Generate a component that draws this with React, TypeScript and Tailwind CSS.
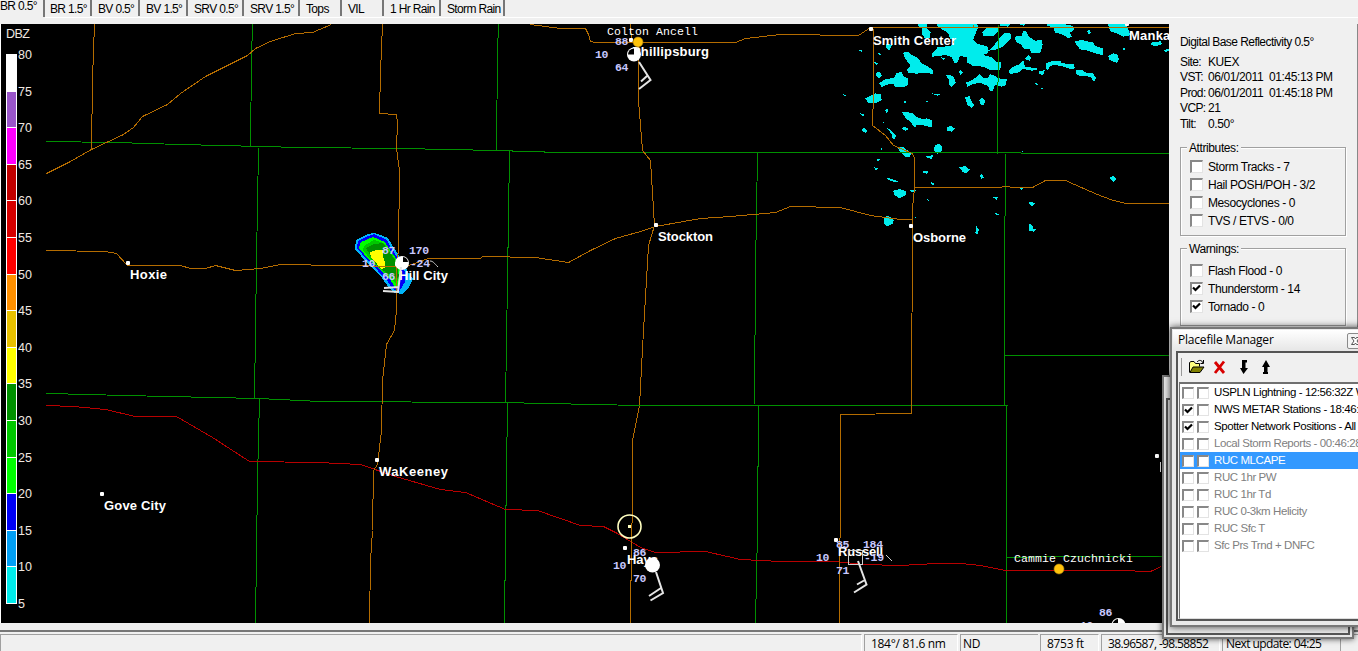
import type { ReactNode } from "react";

const tabs = [
  { label: "BR 1.5°", width: "w-[47px]" },
  { label: "BV 0.5°", width: "w-[47px]" },
  { label: "BV 1.5°", width: "w-[47px]" },
  { label: "SRV 0.5°", width: "w-[55px]" },
  { label: "SRV 1.5°", width: "w-[55px]" },
  { label: "Tops", width: "w-[41px]" },
  { label: "VIL", width: "w-[41px]" },
  { label: "1 Hr Rain", width: "w-[56px]" },
  { label: "Storm Rain", width: "w-[63px]" },
];

// from strongest to weakest, each band spans 5 dBZ
const scale = [
  { dbz: 80, color: "#ffffff" },
  { dbz: 75, color: "#9955c9" },
  { dbz: 70, color: "#ff00ff" },
  { dbz: 65, color: "#c00000" },
  { dbz: 60, color: "#d60000" },
  { dbz: 55, color: "#ff0000" },
  { dbz: 50, color: "#ff9000" },
  { dbz: 45, color: "#e7c000" },
  { dbz: 40, color: "#ffff00" },
  { dbz: 35, color: "#009000" },
  { dbz: 30, color: "#00c800" },
  { dbz: 25, color: "#00ff00" },
  { dbz: 20, color: "#0000f6" },
  { dbz: 15, color: "#019ff4" },
  { dbz: 10, color: "#00ecec" },
];

const counties = [
  "46,141 115,142 180,144 300,147 400,148 496,150 560,152 865,152 1169,153",
  "46,393 88,394 123,395 258,398 320,401 500,402 640,405 1007,405",
  "252,24 251,58 250,147",
  "258,148 256,260 254,398",
  "259,398 257,480 255,623",
  "498,24 497,52 496,150",
  "509,151 507,280 505,403",
  "507,403 505,540 504,623",
  "757,153 755,270 754,404",
  "758,405 757,530 755,623",
  "998,24 998,81",
  "997,81 997,153",
  "1005,153 1005,215",
  "1004,215 1004,405",
  "1006,405 1006,623",
  "1004,355 1169,355",
  "1007,557 1060,556 1161,556",
];

const highways = [
  "94,24 93,50 92,80 91,149",
  "46,173 70,161 91,149 123,134 133,127 142,116 167,104 180,93 205,76 237,60 247,55 255,48 270,41 295,33 312,32 331,24",
  "382,24 380,72 379,113 396,114 397,123 396,148 399,170 398,250 396,266 396,310 394,330 386,344 382,380 381,430 377,464 373,470 372,530 370,560 369,623",
  "46,250 105,251 116,253 127,265 180,265 190,268 205,268 215,265 235,270 260,268 280,264 340,265 400,266 408,265 428,258 445,258 480,258 482,256 535,257 568,262 590,250 615,238 640,231 655,226 700,218 730,216 775,212 790,206 840,207 870,215 900,219 912,219",
  "530,24 560,28 585,28 588,34 590,41 595,42 735,42 745,38 780,34 858,35 870,27 1169,27",
  "630,24 631,40 638,42 638,100 642,150 650,160 654,225 648,245 643,330 639,405 632,440 632,505 631,540 630,623",
  "873,28 873,93 872,125 885,135 893,145 912,153 914,158 914,187 912,208 912,219 911,413 840,414 840,535 839,540 839,623",
  "914,187 998,187 1005,186 1013,187 1032,187 1045,180 1065,180 1083,188 1097,194 1110,199 1125,203 1169,203",
  "973,24 973,27",
];

const interstate =
  "46,405 73,406 105,409 135,416 176,416 212,437 249,461 318,462 360,464 395,476 440,489 465,492 505,509 537,510 580,525 603,526 617,533 640,547 655,552 705,551 740,559 780,561 835,561 863,564 900,565 935,563 960,563 980,565 1005,570 1118,570 1150,571 1161,566";

// light echoes, traced on a grid three times finer than the map
const echoes = [
  "232,12 262,12 260,25 272,35 270,55 255,55 245,40 245,22 236,20",
  "290,12 412,12 414,22 405,45 400,60 414,72 444,80 445,98 430,105 455,112 470,125 483,125 484,140 478,150 450,150 430,140 400,138 382,128 380,112 360,108 352,128 344,130 336,112 315,105 300,108 275,110 275,100 290,88 290,82 330,78 345,66 330,55 325,40 310,30 295,22",
  "440,25 455,20 480,20 475,35 460,48 430,48 427,38",
  "482,50 495,38 510,38 515,48 510,60 495,72 490,80 465,90 445,92 460,78 470,66",
  "480,12 510,12 505,20 482,18",
  "540,12 558,12 550,17 540,15",
  "523,50 545,48 550,32 560,35 565,48 585,62 605,60 608,75 600,100 575,100 570,88 550,85 545,75 528,65",
  "620,12 670,12 700,18 702,30 690,38 696,50 685,55 665,42 645,38 640,22 622,18",
  "803,12 855,12 866,30 870,46 850,50 830,40 812,34",
  "703,65 725,60 760,68 765,78 788,85 788,105 765,100 745,92 720,88",
  "805,108 820,100 835,105 836,120 830,128 808,120",
  "932,68 962,64 966,72 950,78 934,76",
  "972,90 987,86 987,92 976,96",
  "190,98 205,96 215,105 235,115 245,130 265,140 280,152 280,162 250,158 230,161 205,158 200,150 212,138 198,118 192,108",
  "110,155 120,155 126,168 118,175 108,168",
  "118,190 130,180 165,172 168,160 185,155 190,168 203,175 203,195 190,202 165,200 160,192 140,194 125,202",
  "318,165 338,167 345,178 347,188 335,200 328,195 328,182",
  "378,188 400,178 420,162 430,175 442,175 450,163 465,168 475,175 500,178 498,195 485,200 465,195 458,212 450,212 444,198 420,188 400,192 382,200",
  "506,155 515,142 540,132 550,122 555,140 590,145 590,150 575,152 548,146 535,158 510,162",
  "595,155 615,150 610,165 598,162",
  "618,130 640,122 662,122 665,130 700,132 705,145 690,147 665,138 640,135 628,140 625,150 618,146",
  "708,150 725,150 740,158 760,160 768,175 762,184 750,170 725,168 710,165",
  "555,115 565,105 573,112 570,122 558,120",
  "75,235 90,228 105,220 122,222 125,240 105,250 85,248",
  "186,276 215,278 228,290 250,298 260,295 275,300 275,322 245,315 230,315 225,322 210,305 195,292",
  "375,232 388,228 395,245 402,255 395,264 382,255",
  "418,240 427,233 436,242 432,254 422,254",
  "320,322 332,317 344,325 335,335 322,332",
  "282,385 285,375 298,372 308,380 305,392 293,402 284,395",
  "172,380 190,382 215,400 208,412 195,410 180,395",
  "138,322 150,328 168,345 165,358 156,355 155,342",
  "186,325 195,320 206,328 196,333",
  "256,408 280,406 275,416 262,415",
  "248,452 265,454 262,462 250,458",
  "358,442 375,438 389,448 380,460 368,456",
  "140,473 165,480 177,486 165,486 145,480",
  "160,512 180,507 200,515 198,525 178,535 162,524",
  "210,510 228,510 222,517 212,515",
  "132,592 145,587 162,600 158,612 140,620 132,612",
  "140,68 156,76 148,92 138,84",
  "112,98 125,102 120,108",
  "102,125 116,130 108,136",
  "56,90 68,92 64,96",
  "302,112 315,114 312,120",
  "356,155 362,150 368,158 362,166",
  "742,34 750,28 752,40 746,44",
  "849,85 854,85 854,90 849,90",
  "585,189 596,192 588,196",
  "602,202 610,206 606,209",
  "274,220 302,224 292,227",
  "189,242 200,242 196,251",
  "258,244 263,244 262,249",
  "136,272 142,264 144,276 138,280",
  "60,280 74,284 70,289",
  "64,330 72,324 82,332 78,340",
  "8,222 12,222 12,225 17,225 17,228 8,225",
  "126,306 134,306 132,310",
  "124,384 127,384 127,391 124,391",
  "110,418 120,418 114,424",
  "102,442 114,446 108,451",
  "272,485 284,492 276,496",
  "420,468 426,462 432,472 424,476",
  "808,474 820,467 830,478 820,486",
  "459,532 474,532 470,540",
  "536,502 552,504 546,510",
  "566,545 586,549 578,557 570,556",
  "463,580 480,581 470,587",
  "260,537 270,540 264,544",
  "409,617 416,628 415,642 406,640",
  "567,612 576,615 580,626 590,628 582,635 568,632",
  "221,591 228,591 227,594",
  "483,315 487,315 486,318",
  "545,393 549,393 549,396",
];

const towns = [
  { name: "Phillipsburg", x: 632, y: 56, w: 77, dot: [631, 40] },
  { name: "Smith Center", x: 873, y: 45, w: 83, dot: [871, 29] },
  { name: "Mankato", x: 1129, y: 40, w: 54, dot: [1127, 24] },
  { name: "Osborne", x: 913, y: 242, w: 53, dot: [911, 226] },
  { name: "Stockton", x: 658, y: 241, w: 55, dot: [656, 225] },
  { name: "Hoxie", x: 130, y: 279, w: 37, dot: [128, 263] },
  { name: "Hill City", x: 399, y: 280, w: 49, dot: [397, 264] },
  { name: "WaKeeney", x: 379, y: 476, w: 69, dot: [377, 460] },
  { name: "Gove City", x: 104, y: 510, w: 62, dot: [102, 494] },
  { name: "Hays", x: 627, y: 564, w: 31, dot: [625, 548] },
  { name: "Russell", x: 838, y: 556, w: 45, dot: [836, 540] },
];

const readings: [string, number, number][] = [
  ["88", 615, 45],
  ["10", 595, 58],
  ["64", 615, 71],
  ["87", 382, 254],
  ["170", 409, 254],
  ["10", 362, 267],
  ["-24", 410, 267],
  ["66", 382, 280],
  ["86", 633, 556],
  ["10", 613, 569],
  ["70", 633, 582],
  ["85", 836, 548],
  ["184", 863, 548],
  ["10", 816, 561],
  ["-19", 864, 561],
  ["71", 836, 574],
  ["86", 1099, 616],
  ["10", 1080, 629],
];

function RadarMap() {
  return (
    <svg className="block shrink-0 bg-black" width="1168" height="599" viewBox="1 24 1168 599">
      <g fill="#00ecec" shapeRendering="crispEdges" transform="translate(840 20) scale(.33333)">
        {echoes.map((points) => (
          <polygon key={points} points={points} />
        ))}
      </g>

      {/* storm cell west of Hill City */}
      <g shapeRendering="crispEdges">
        <polygon fill="#00b4f8" points="374,233 381,235 388,238 392,245 398,254 403,263 408,272 413,279 409,287 402,294 395,293 389,288 382,278 370,266 361,256 355,249 356,240 362,237 368,234" />
        <polygon fill="#0000f6" points="374,234 387,240 390,246 401,263 405,272 405,282 399,292 393,289 388,282 378,271 362,254 357,248 358,241 366,237" />
        <polygon fill="#00ff00" points="373,237 385,242 388,247 397,260 402,273 400,282 396,289 391,281 380,269 370,261 359,248 361,242" />
        <polygon fill="#00c800" points="374,240 384,243 389,250 397,262 399,278 396,284 388,276 372,261 363,250 364,246" />
        <polygon fill="#009000" points="366,248 374,244 383,243 390,253 397,263 399,277 394,279 388,274 376,265" />
        <polygon fill="#ffff00" points="370,252 377,250 383,250 383,257 385,262 385,268 381,269 377,264 371,257" />
      </g>

      {/* half pixel shift keeps one pixel lines on the pixel grid */}
      <g fill="none" strokeWidth="1" shapeRendering="crispEdges" transform="translate(.5 .5)">
        {counties.map((points) => (
          <polyline key={points} points={points} stroke="#009000" />
        ))}
        <polyline points={interstate} stroke="#b80000" />
        {highways.map((points) => (
          <polyline key={points} points={points} stroke="#b46c00" />
        ))}
      </g>

      <g fill="#fff" fontFamily="'Liberation Sans', Arial, sans-serif" fontSize="13" fontWeight="700">
        {towns.map((t) => (
          <g key={t.name}>
            <rect x={t.dot[0] - 2} y={t.dot[1] - 2} width="4" height="4" rx="1" />
            <text x={t.x} y={t.y} textLength={t.w}>{t.name}</text>
          </g>
        ))}
        <rect x="1160" y="462" width="1" height="10" />
        <rect x="1155" y="454" width="4" height="4" rx="1" />
      </g>

      {/* station plots */}
      <circle cx="634" cy="54.5" r="7" fill="#fff" />
      <path d="M634 54.5V48.5A6 6 0 0 0 628 54.5Z" fill="#000" />
      <circle cx="402" cy="263" r="7" fill="#fff" />
      <path d="M403 262V257A6 6 0 0 1 408 262Z" fill="#000" />
      <circle cx="652.5" cy="565" r="7.5" fill="#fff" />
      <circle cx="1118.5" cy="625" r="7" fill="#fff" />
      <path d="M1118 619V625H1112.500A6 6 0 0 1 1118 619Z" fill="#000" />
      <rect x="848.500" y="550.500" width="14" height="14" fill="none" stroke="#ccc" />
      <g fill="none" stroke="#e4e4e4" strokeWidth="2">
        <path d="M639 62L650.500 80L639 89M647 76L641 81.500" />
        <path d="M401 267L398 292L383 291M399 287L384 288" />
        <path d="M656 572L663 593L650.500 600.500M661 588L649 596" />
        <path d="M858 561L866.500 584.500L854 592.500M864 580.500L857 584.500" />
      </g>
      <path d="M430 261C433 261 434 263 438 267M886 555L892 561" fill="none" stroke="#ccc" />

      <g fill="#c8c8ff" fontFamily="'Liberation Mono', 'Courier New', monospace" fontSize="11.500" fontWeight="700">
        {readings.map(([value, x, y]) => (
          <text key={`${x}-${y}`} x={x} y={y} textLength={value.length * 6.7}>{value}</text>
        ))}
      </g>

      {/* spotters */}
      <g fill="#fff" fontFamily="'Liberation Mono', 'Courier New', monospace" fontSize="11.500">
        <text x="607" y="35" textLength="91">Colton Ancell</text>
        <text x="1014" y="562" textLength="119">Cammie Czuchnicki</text>
      </g>
      <circle cx="638" cy="42" r="5" fill="#ffc40c" stroke="#a88010" strokeWidth=".6" />
      <circle cx="1059" cy="569" r="5" fill="#ffc40c" stroke="#a88010" strokeWidth=".6" />

      <circle cx="629.500" cy="526.500" r="11.500" fill="none" stroke="#ffffc0" strokeWidth="1.600" />
      <rect x="628" y="525" width="3" height="3" fill="#ffffc0" />

      {/* reflectivity legend */}
      <g fontFamily="'Liberation Sans', Arial, sans-serif" fontSize="12.5" fill="#f0e8e0">
        <text x="6" y="38" textLength="24">DBZ</text>
        <rect x="6" y="54" width="11" height="550" fill="#fff" />
        {scale.map((s, i) => (
          <g key={s.dbz}>
            <rect x="7" y={55 + i * 36.6} width="9" height="35.6" fill={s.color} shapeRendering="crispEdges" />
            <text x="18" y={59 + i * 36.6} textLength="14">{s.dbz}</text>
          </g>
        ))}
        <text x="18" y="608">5</text>
      </g>
    </svg>
  );
}

function Checkbox({ checked = false, small = false }: { checked?: boolean; small?: boolean }) {
  return (
    <span
      className={`relative block shrink-0 border-t-2 border-l-2 border-r border-b border-t-[#888] border-l-[#888] border-r-[#e3e3e3] border-b-[#e3e3e3] bg-white ${
        small ? "h-[12px] w-[12px]" : "h-[13px] w-[13px]"
      }`}
    >
      {checked && (
        <svg className="absolute top-0 left-0" width="9" height="9" viewBox="0 0 9 9">
          <path d="M1 3.500L3.500 6L8 1.500" fill="none" stroke="#000" strokeWidth="2.200" />
        </svg>
      )}
    </span>
  );
}

function Group({ title, height, children }: { title: string; height: string; children: ReactNode }) {
  return (
    <fieldset className={`relative border border-[#a0a0a0] shadow-[1px_1px_0_#fff,inset_1px_1px_0_#fff] ${height}`}>
      <span className="absolute -top-[7px] left-[6px] bg-[#f0f0f0] px-[2px] leading-[14px]">{title}</span>
      <div className="flex flex-col pt-[9px] pl-[9px]">{children}</div>
    </fieldset>
  );
}

function Option({ label, checked }: { label: string; checked?: boolean }) {
  return (
    <label className="flex h-[18px] items-center gap-[5px]">
      <Checkbox checked={checked} />
      <span className="pt-[3px]">{label}</span>
    </label>
  );
}

const info = [
  ["Site:", "KUEX"],
  ["VST:", "06/01/2011  01:45:13 PM"],
  ["Prod:", "06/01/2011  01:45:18 PM"],
  ["VCP:", "21"],
  ["Tilt:", "0.50°"],
];

function SidePanel() {
  return (
    <aside className="h-[599px] grow border-r border-[#888] pt-[11px] pl-[11px] text-[12px] leading-[15.5px] tracking-[-0.4px]">
      <p className="tracking-[-0.55px]">Digital Base Reflectivity 0.5°</p>
      <dl className="mt-[4px]">
        {info.map(([name, value]) => (
          <div key={name} className="flex whitespace-pre">
            <dt className="w-[28px] shrink-0 tracking-[-0.6px]">{name}</dt>
            <dd>{value}</dd>
          </div>
        ))}
      </dl>
      <div className="mt-[15px] flex w-[166px] flex-col gap-[12px]">
        <Group title="Attributes:" height="h-[89px]">
          <Option label="Storm Tracks - 7" />
          <Option label="Hail POSH/POH - 3/2" />
          <Option label="Mesocyclones - 0" />
          <Option label="TVS / ETVS - 0/0" />
        </Group>
        <Group title="Warnings:" height="h-[78px]">
          <div className="pt-[3px]">
            <Option label="Flash Flood - 0" />
            <Option label="Thunderstorm - 14" checked />
            <Option label="Tornado - 0" checked />
          </div>
        </Group>
      </div>
    </aside>
  );
}

const placefiles = [
  { name: "USPLN Lightning - 12:56:32Z W", state: "on" },
  { name: "NWS METAR Stations - 18:46:", state: "on", checked: true },
  { name: "Spotter Network Positions - All", state: "on", checked: true },
  { name: "Local Storm Reports - 00:46:28", state: "off" },
  { name: "RUC MLCAPE", state: "selected" },
  { name: "RUC 1hr PW", state: "off" },
  { name: "RUC 1hr Td", state: "off" },
  { name: "RUC 0-3km Helicity", state: "off" },
  { name: "RUC Sfc T", state: "off" },
  { name: "Sfc Prs Trnd + DNFC", state: "off" },
];

const rowStyle: Record<string, string> = {
  on: "text-black",
  off: "text-[#808080]",
  selected: "bg-[#3399ff] text-white",
};

function PlacefileManager() {
  return (
    <section className="absolute top-[327px] left-[1170px] h-[300px] w-[230px] border-2 border-[#777] bg-[#e9e9e9] p-[1px] shadow-[0_0_7px_rgba(0,0,0,0.7)]">
      <header className="flex h-[21px] items-center bg-linear-to-b from-white to-[#e6e6e6] pl-[5px]">
        <h2 className="w-[169px] shrink-0 pb-[2px] font-['Open_Sans','Noto_Sans',sans-serif] text-[12px] tracking-[-0.2px]">
          Placefile Manager
        </h2>
        <span className="flex h-[16px] w-[27px] items-center rounded-[2px] border border-[#8a8a8a] bg-[#f4f4f4] pl-[3px] text-[#555]">
          <svg width="9" height="8" viewBox="0 0 9 8" fill="#fff" stroke="currentColor">
            <path d="M.5.5h3L4.500 2L5.500.5h3L6 4L8.500 7.500h-3L4.500 6L3.500 7.500h-3L3 4Z" />
          </svg>
        </span>
      </header>
      <div className="ml-[3px] h-[270px] border-2 border-[#555] bg-[#f0f0f0] p-[1px]">
        <div className="flex h-[28px] items-center pb-[3px] pl-[2px]">
          <span className="h-[18px] w-px bg-[#999]" />
          <svg className="ml-[6px]" width="86" height="18" viewBox="1188 357 86 18">
            <path d="M1189.500 371.500V361.500L1191 360.500H1194L1195.500 362.500H1199.500V365.500" fill="#ffff80" stroke="#000" />
            <path d="M1190 371.500L1193 366H1204L1200 371.500Z" fill="#808000" stroke="#000" />
            <path d="M1197 361C1199 358.500 1202 359 1203 362M1203.500 359V362.500H1200.500" fill="none" stroke="#000" />
            <path d="M1215 361L1224 372M1224 360.500L1215 372" fill="none" stroke="#d80000" strokeWidth="2.800" />
            <path d="M1242 359H1247V361.500H1245.500V367H1248L1243.500 373L1240 367H1242Z" fill="#000" />
            <path d="M1263 373H1268V371H1267.500V366H1270L1266 359L1262 366H1264V371H1263Z" fill="#000" />
          </svg>
        </div>
        <div className="h-[237px] border-t-2 border-l border-[#707070] border-b border-b-[#ddd] bg-white text-[11.5px] tracking-[-0.42px]">
          {placefiles.map((file) => (
            <div key={file.name} className={`flex h-[17px] items-center gap-[3px] pl-[2px] whitespace-nowrap ${rowStyle[file.state]}`}>
              <Checkbox small checked={file.checked} />
              <Checkbox small />
              <span className="pl-[2px]">{file.name}</span>
            </div>
          ))}
        </div>
      </div>
    </section>
  );
}

function StatusBar() {
  const cell = "border-t border-l border-[#a0a0a0] border-r border-r-white pl-[6px] h-[17px]";
  return (
    <footer className="mt-[7px] flex h-[21px] gap-[2px] border-t-2 border-[#777] pt-[2px] font-['Open_Sans','Noto_Sans',sans-serif] text-[12px] leading-[17px] tracking-[-0.3px] whitespace-nowrap">
      <div className={`w-[862px] shrink-0 ${cell}`} />
      <div className={`w-[94px] shrink-0 ${cell}`}>184°/ 81.6 nm</div>
      <div className="h-[17px] w-[78px] shrink-0 border-t border-l border-[#a0a0a0] pl-[2px]">ND</div>
      <div className={`w-[59px] shrink-0 ${cell}`}>8753 ft</div>
      <div className={`w-[119px] shrink-0 tracking-[-0.65px] ${cell}`}>38.96587, -98.58852</div>
      <div className="h-[17px] w-[116px] shrink-0 border-t border-l border-[#a0a0a0] pl-[3px] tracking-[-0.6px]">Next update: 04:25</div>
      <div className="h-[17px] grow border-t border-l border-[#a0a0a0]" />
    </footer>
  );
}

export default function App() {
  return (
    <div className="relative h-[651px] w-[1358px] overflow-hidden bg-[#f0f0f0] font-['Liberation_Sans',Arial,sans-serif] text-black">
      <nav className="flex h-[24px] text-[12px] leading-[18px] tracking-[-0.65px] whitespace-nowrap">
        <span className="h-[17px] w-[45px] border-r-2 border-[#777] leading-[13px]">BR 0.5°</span>
        <div className="flex h-[18px] grow gap-px border-b border-white">
          {tabs.map((tab) => (
            <span key={tab.label} className={`h-[16px] shrink-0 border-r-2 border-[#777] pl-[5px] ${tab.width}`}>
              {tab.label}
            </span>
          ))}
        </div>
      </nav>

      <main className="flex border-l border-white">
        <RadarMap />
        <SidePanel />
      </main>

      <StatusBar />

      {/* window lying behind the placefile manager */}
      <div className="absolute top-[375px] left-[1162px] h-[264px] w-[192px] border-2 border-[#777] bg-[#e8e8e8] p-[2px] shadow-[0_0_6px_rgba(0,0,0,0.7)]">
        <div className="mt-[19px] h-[237px] border-2 border-[#555]" />
      </div>
      <PlacefileManager />
    </div>
  );
}
